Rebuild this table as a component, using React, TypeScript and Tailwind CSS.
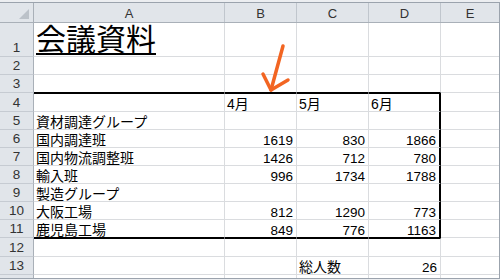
const cols = 'grid grid-cols-[34px_191px_72px_72px_72px_1fr]'
const font = "font-['Liberation_Sans','Noto_Sans_CJK_JP',sans-serif]"

type Val = string | number | null

// sheet rows 1..14, each with its height and the values of columns A..E
const rows: { h: string; cells: Val[] }[] = [
  { h: 'h-[34px]', cells: [null, null, null, null, null] },
  { h: 'h-[18px]', cells: [null, null, null, null, null] },
  { h: 'h-[18px]', cells: [null, null, null, null, null] },
  { h: 'h-[19px]', cells: [null, '4月', '5月', '6月', null] },
  { h: 'h-[18px]', cells: ['資材調達グループ', null, null, null, null] },
  { h: 'h-[18px]', cells: ['国内調達班', 1619, 830, 1866, null] },
  { h: 'h-[18px]', cells: ['国内物流調整班', 1426, 712, 780, null] },
  { h: 'h-[18px]', cells: ['輸入班', 996, 1734, 1788, null] },
  { h: 'h-[18px]', cells: ['製造グループ', null, null, null, null] },
  { h: 'h-[18px]', cells: ['大阪工場', 812, 1290, 773, null] },
  { h: 'h-[18px]', cells: ['鹿児島工場', 849, 776, 1163, null] },
  { h: 'h-[19px]', cells: [null, null, null, null, null] },
  { h: 'h-[18px]', cells: [null, null, '総人数', 26, null] },
]

function DataCell({ r, c, v }: { r: number; c: number; v: Val }) {
  const inBox = c <= 4
  const right =
    c === 5
      ? ''
      : c === 4 && r >= 4 && r <= 11
        ? 'border-r-2 border-r-black'
        : 'border-r border-r-[#dadcdf]'
  const bottom =
    inBox && (r === 3 || r === 11) ? 'border-b border-b-black' : 'border-b border-b-[#dadcdf]'
  const top = inBox && (r === 4 || r === 12) ? 'border-t border-t-black' : ''
  const num = typeof v === 'number'

  return (
    <div
      className={`flex items-end overflow-visible whitespace-nowrap pl-[2px] pr-[3px] ${right} ${bottom} ${top} ${num ? 'justify-end' : 'justify-start'}`}
    >
      {r === 1 && c === 1 ? (
        <span className="pb-[1px] text-[30px] leading-none text-black underline decoration-[1.5px] underline-offset-[3px]">
          会議資料
        </span>
      ) : num ? (
        <span className="text-[13.5px] leading-none text-black">{v}</span>
      ) : v ? (
        <span className="text-[14px] leading-none text-black">{v}</span>
      ) : null}
    </div>
  )
}

export default function App() {
  return (
    <div className={`relative h-[280px] w-[500px] overflow-hidden bg-[#eceef1] pt-[2px] ${font}`}>
      <div className="h-[277px] overflow-hidden border-y border-r border-[#9ba3ad] bg-white">
        {/* column headers */}
        <div className={`${cols} h-[20px] border-b border-[#a9b0b8] bg-[#e1e5ea] text-[13px] leading-none text-[#333]`}>
          <div className="flex items-end justify-end border-r border-[#a9b0b8] pb-[3px] pr-[4px]">
            <svg width="10" height="10" viewBox="0 0 10 10">
              <path d="M10 0 L10 10 L0 10 Z" fill="#bcc2c9" />
            </svg>
          </div>
          {['A', 'B', 'C', 'D', 'E'].map((l, i) => (
            <div
              key={l}
              className={`flex items-end justify-center pb-[2px] ${i < 4 ? 'border-r border-[#c0c6cd]' : ''}`}
            >
              {l}
            </div>
          ))}
        </div>

        {rows.map((row, ri) => (
          <div key={ri} className={`${cols} ${row.h}`}>
            <div className="flex items-end justify-center border-r border-b border-r-[#a9b0b8] border-b-[#c6cbd2] bg-[#e1e5ea] pb-[2px] text-[13.5px] leading-none text-[#333]">
              {ri + 1}
            </div>
            {row.cells.map((v, ci) => (
              <DataCell key={ci} r={ri + 1} c={ci + 1} v={v} />
            ))}
          </div>
        ))}

        {/* next row, only its top edge shows */}
        <div className={`${cols} h-[18px]`}>
          <div className="border-r border-r-[#a9b0b8] bg-[#e1e5ea]" />
          <div className="border-r border-r-[#dadcdf]" />
          <div className="border-r border-r-[#dadcdf]" />
          <div className="border-r border-r-[#dadcdf]" />
          <div className="border-r border-r-[#dadcdf]" />
          <div />
        </div>
      </div>

      {/* annotation arrow pointing at B4 */}
      <svg className="pointer-events-none absolute left-0 top-0" width="500" height="280">
        <g stroke="#f26522" strokeWidth="3.5" strokeLinecap="round" strokeLinejoin="round" fill="none">
          <path d="M283 46 L271 90" />
          <path d="M263 74 L271 90 L288 80" />
        </g>
      </svg>
    </div>
  )
}
